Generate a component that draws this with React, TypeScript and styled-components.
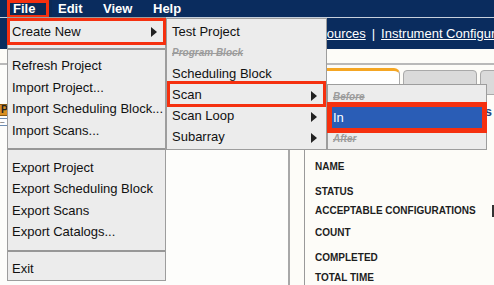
import React from 'react';
import styled, { createGlobalStyle, css } from 'styled-components';

const NAVY = '#0a2c5e';
const RED = '#f5300f';

const Global = createGlobalStyle`
  html, body { margin: 0; padding: 0; }
  body {
    width: 494px; height: 285px; overflow: hidden;
    background: #fdfcf8;
    font-family: "Liberation Sans", Arial, sans-serif;
  }
`;

const Page = styled.div`
  position: relative;
  width: 494px;
  height: 285px;
  overflow: hidden;
  display: flex;
  flex-direction: column;
  background: #fdfcf8;
`;

/* ---------- top menu bar ---------- */
const MenuBar = styled.div`
  box-sizing: border-box;
  height: 18px;
  background: ${NAVY};
  border-bottom: 1px solid #c7d0dc;
  display: flex;
  padding-left: 7px;
`;

const MenuTitle = styled.div<{ $w: number; $marked?: boolean }>`
  position: relative;
  width: ${(p) => p.$w}px;
  box-sizing: border-box;
  padding-left: 6px;
  font-weight: bold;
  font-size: 13px;
  line-height: 17px;
  color: #fff;
  ${(p) =>
    p.$marked &&
    css`
      background: #0b2a56;
      &::after {
        content: '';
        position: absolute;
        left: 0; top: 0; right: 3px; bottom: -1px;
        border: 3px solid ${RED};
      }
    `}
`;

const NavBand = styled.div`
  height: 31px;
  background: ${NAVY};
  display: flex;
  align-items: center;
  gap: 6px;
  padding-left: 318px;
  font-size: 13px;
  color: #fff;
  white-space: nowrap;
  overflow: hidden;
`;

const NavLink = styled.span`
  text-decoration: underline;
`;

const SubStrip = styled.div`
  height: 14px;
  background: #fdfcf8;
  border-bottom: 2px solid #b9b9b9;
`;

/* ---------- body ---------- */
const Body = styled.div`
  flex: 1;
  display: flex;
  min-height: 0;
`;

const LeftPanel = styled.div`
  box-sizing: border-box;
  flex: none;
  width: 290px;
  border-right: 2px solid #a8a8a8;
  background: #fdfdfb;
  padding-top: 39px;
  display: flex;
  flex-direction: column;
  gap: 2px;
`;

const PButton = styled.div`
  box-sizing: border-box;
  width: 16px;
  height: 12px;
  background: #d98f22;
  border: 1px solid #8a5a10;
  border-left: none;
  font-size: 10px;
  font-weight: bold;
  line-height: 10px;
  padding-left: 1px;
  color: #222;
`;

const Expander = styled.div`
  box-sizing: border-box;
  width: 8px;
  height: 8px;
  border: 1px solid #6d8db3;
  border-left: none;
  background: #fff;
  font-size: 8px;
  line-height: 6px;
  color: #333;
`;

const RightPanel = styled.div`
  flex: 1;
  min-width: 0;
  overflow: hidden;
  margin-left: 14px;
  border-left: 1px solid #9a9a9a;
  padding-left: 10px;
  display: flex;
  flex-direction: column;
`;

const Tabs = styled.div`
  display: flex;
  align-items: flex-end;
  gap: 3px;
  margin-top: 3px;
  margin-left: -9px;
  height: 27px;
`;

const Tab = styled.div<{ $w: number; $active?: boolean }>`
  box-sizing: border-box;
  flex: none;
  width: ${(p) => p.$w}px;
  text-align: center;
  font-size: 13px;
  line-height: 15px;
  color: #222;
  white-space: nowrap;
  ${(p) =>
    p.$active
      ? css`
          height: 27px;
          background: #fff;
          border: 1px solid #aaa;
          border-top: 3px solid #f5a623;
          border-radius: 0 6px 0 0;
          padding-top: 9.5px;
        `
      : css`
          height: 25px;
          background: #dadada;
          border: 1px solid #a9a9a9;
          border-radius: 4px 4px 0 0;
          padding-top: 9.5px;
        `}
`;

const SectionHeader = styled.div`
  display: flex;
  justify-content: flex-end;
  padding-right: 2px;
  margin-top: 10px;
  font-size: 13px;
  font-weight: bold;
  line-height: 14px;
  color: #23447f;
  white-space: nowrap;
`;

const Field = styled.div<{ $gap: number }>`
  display: flex;
  align-items: center;
  margin-top: ${(p) => p.$gap}px;
  height: 12px;
`;

const FieldLabel = styled.div`
  width: 177px;
  flex: none;
  font-size: 10px;
  font-weight: bold;
  line-height: 12px;
  color: #1e1e1e;
  white-space: nowrap;
`;

const ValueBox = styled.div`
  box-sizing: border-box;
  width: 12px;
  height: 12px;
  border: 2px solid #333;
  background: #fff;
  flex: none;
`;

/* ---------- menus (overlays) ---------- */
const Menu = styled.div<{ $l: number; $t: number; $w: number; $h: number; $pt: number }>`
  position: absolute;
  left: ${(p) => p.$l}px;
  top: ${(p) => p.$t}px;
  width: ${(p) => p.$w}px;
  height: ${(p) => p.$h}px;
  box-sizing: border-box;
  background: #ececec;
  border: 1px solid #9d9d9d;
  padding-top: ${(p) => p.$pt}px;
  display: flex;
  flex-direction: column;
`;

const Item = styled.div<{
  $h?: number;
  $pl?: number;
  $pr?: number;
  $disabled?: boolean;
  $marked?: 'row' | 'wide';
  $selected?: boolean;
}>`
  position: relative;
  flex: none;
  box-sizing: border-box;
  height: ${(p) => p.$h ?? 21}px;
  display: flex;
  align-items: center;
  justify-content: space-between;
  padding-left: ${(p) => p.$pl ?? 5}px;
  padding-right: ${(p) => p.$pr ?? 9}px;
  font-size: 13px;
  color: #111;
  white-space: nowrap;
  ${(p) =>
    p.$disabled &&
    css`
      font-size: 10px;
      font-style: italic;
      font-weight: bold;
      color: #9c9c9c;
      text-decoration: line-through;
    `}
  ${(p) =>
    p.$marked === 'row' &&
    css`
      &::after {
        content: '';
        position: absolute;
        left: 0; right: 0; top: -3px; bottom: -2px;
        border: 3px solid ${RED};
      }
    `}
  ${(p) =>
    p.$marked === 'wide' &&
    css`
      margin: 0 -1px;
      &::after {
        content: '';
        position: absolute;
        inset: 0;
        border: 3px solid ${RED};
      }
    `}
  ${(p) =>
    p.$selected &&
    css`
      margin: 0 4px;
      background: #2a5db6;
      color: #fff;
      &::after {
        content: '';
        position: absolute;
        inset: -5px;
        border: 5px solid ${RED};
      }
    `}
`;

const Arrow = styled.span<{ $dy?: number }>`
  width: 0;
  height: 0;
  border-top: 5px solid transparent;
  border-bottom: 5px solid transparent;
  border-left: 6px solid #222;
  margin-top: ${(p) => p.$dy ?? 0}px;
`;

const Separator = styled.div<{ $above: number; $below: number }>`
  flex: none;
  height: 2px;
  background: #979797;
  margin-top: ${(p) => p.$above}px;
  margin-bottom: ${(p) => p.$below}px;
`;

const fields: { label: string; gap: number; box?: boolean }[] = [
  { label: 'NAME', gap: 42 },
  { label: 'STATUS', gap: 13 },
  { label: 'ACCEPTABLE CONFIGURATIONS', gap: 7, box: true },
  { label: 'COUNT', gap: 10 },
  { label: 'COMPLETED', gap: 13 },
  { label: 'TOTAL TIME', gap: 8 },
];

export default function App() {
  return (
    <>
      <Global />
      <Page>
        <MenuBar>
          <MenuTitle $w={45} $marked>File</MenuTitle>
          <MenuTitle $w={45}>Edit</MenuTitle>
          <MenuTitle $w={50}>View</MenuTitle>
          <MenuTitle $w={50}>Help</MenuTitle>
        </MenuBar>
        <NavBand>
          <NavLink>Sources</NavLink>
          <span>|</span>
          <NavLink>Instrument Configurations</NavLink>
        </NavBand>
        <SubStrip />
        <Body>
          <LeftPanel>
            <PButton>P</PButton>
            <Expander>–</Expander>
          </LeftPanel>
          <RightPanel>
            <Tabs>
              <Tab $w={94} $active>Information</Tab>
              <Tab $w={74}>Report</Tab>
              <Tab $w={90}>Notes</Tab>
            </Tabs>
            <SectionHeader>Details</SectionHeader>
            {fields.map((f) => (
              <Field key={f.label} $gap={f.gap}>
                <FieldLabel>{f.label}</FieldLabel>
                {f.box && <ValueBox />}
              </Field>
            ))}
          </RightPanel>
        </Body>

        {/* File menu */}
        <Menu $l={7} $t={17} $w={159} $h={264} $pt={0}>
          <Item $h={27} $pl={5} $pr={9} $marked="wide">
            Create New
            <Arrow />
          </Item>
          <Separator $above={3} $below={5} />
          <Item $h={21.5} $pl={4}>Refresh Project</Item>
          <Item $h={21.5} $pl={4}>Import Project...</Item>
          <Item $h={21.5} $pl={4}>Import Scheduling Block...</Item>
          <Item $h={21.5} $pl={4}>Import Scans...</Item>
          <Separator $above={7} $below={6.5} />
          <Item $h={21.5} $pl={4}>Export Project</Item>
          <Item $h={21.5} $pl={4}>Export Scheduling Block</Item>
          <Item $h={21.5} $pl={4}>Export Scans</Item>
          <Item $h={21.5} $pl={4}>Export Catalogs...</Item>
          <Separator $above={7} $below={6} />
          <Item $h={21.5} $pl={4}>Exit</Item>
        </Menu>

        {/* Create New submenu */}
        <Menu $l={166} $t={18} $w={161} $h={132} $pt={1.5}>
          <Item>Test Project</Item>
          <Item $disabled>Program Block</Item>
          <Item>Scheduling Block</Item>
          <Item $marked="row">
            Scan
            <Arrow $dy={3} />
          </Item>
          <Item>
            Scan Loop
            <Arrow $dy={3} />
          </Item>
          <Item>
            Subarray
            <Arrow $dy={3} />
          </Item>
        </Menu>

        {/* Scan submenu */}
        <Menu $l={327} $t={84} $w={160} $h={66} $pt={0.5}>
          <Item $disabled>Before</Item>
          <Item $selected $pl={1}>In</Item>
          <Item $disabled>After</Item>
        </Menu>
      </Page>
    </>
  );
}
